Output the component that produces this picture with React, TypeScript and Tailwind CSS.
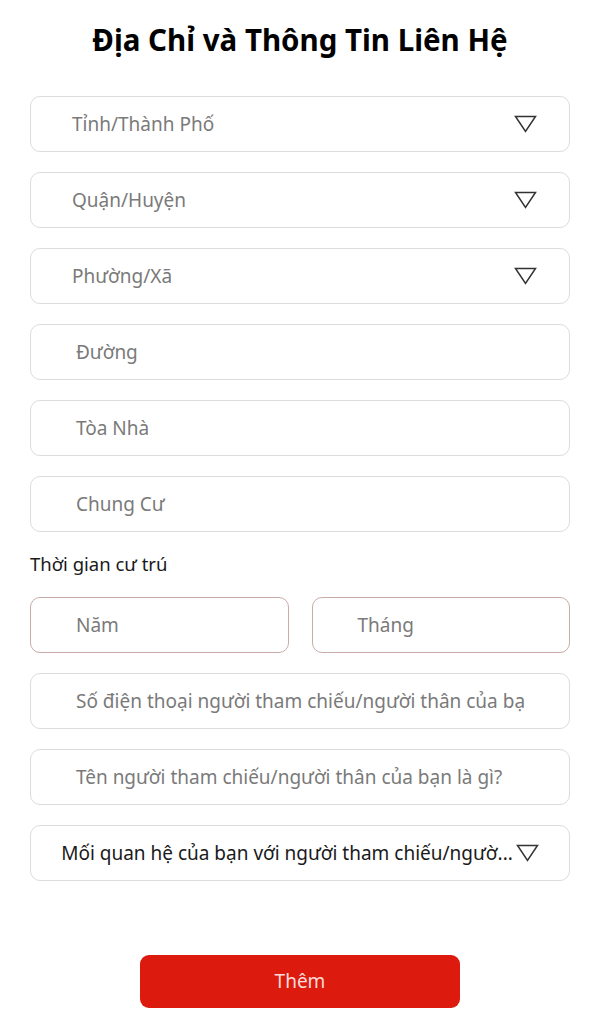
import React from "react";

const Arrow = () => (
  <svg width="23" height="18" viewBox="0 0 23 18" className="shrink-0">
    <path d="M1.5 1.5 H21.5 L11.5 16.5 Z" fill="none" stroke="#333" strokeWidth="1.5" strokeLinejoin="miter" />
  </svg>
);

const Select = ({ label }: { label: string }) => (
  <div className="h-[56px] rounded-[10px] border border-[#dcdcdc] flex items-center pl-[41px] pr-[32px] bg-white">
    <span className="flex-1 text-[19px] text-[#7a7a7a]">{label}</span>
    <Arrow />
  </div>
);

const Input = ({ label, className = "" }: { label: string; className?: string }) => (
  <div className={"h-[56px] rounded-[10px] border flex items-center pl-[45px] bg-white " + className}>
    <span className="text-[19px] text-[#7a7a7a] whitespace-nowrap">{label}</span>
  </div>
);

export default function App() {
  return (
    <div className="w-[600px] h-[1024px] bg-white px-[30px] flex flex-col" style={{ fontFamily: '"Noto Sans", "Open Sans", sans-serif' }}>
      <h1 className="mt-[20px] h-[40px] leading-[40px] text-center text-[29.5px] font-bold text-black">Địa Chỉ và Thông Tin Liên Hệ</h1>
      <div className="mt-[36px] flex flex-col gap-[20px]">
        <Select label="Tỉnh/Thành Phố" />
        <Select label="Quận/Huyện" />
        <Select label="Phường/Xã" />
        <Input label="Đường" className="border-[#dcdcdc]" />
        <Input label="Tòa Nhà" className="border-[#dcdcdc]" />
        <Input label="Chung Cư" className="border-[#dcdcdc]" />
      </div>
      <div className="mt-[18px] h-[28px] leading-[28px] text-[18.5px] text-[#1a1a1a]">Thời gian cư trú</div>
      <div className="mt-[19px] flex gap-[23px]">
        <Input label="Năm" className="flex-1 border-[#c9aca8]" />
        <Input label="Tháng" className="flex-1 border-[#c9aca8]" />
      </div>
      <div className="mt-[20px] flex flex-col gap-[20px]">
        <Input label="Số điện thoại người tham chiếu/người thân của bạ" className="border-[#dcdcdc]" />
        <Input label="Tên người tham chiếu/người thân của bạn là gì?" className="border-[#dcdcdc]" />
        <div className="h-[56px] rounded-[10px] border border-[#dcdcdc] flex items-center justify-center gap-[3px] px-[20px]">
          <span className="text-[19px] text-[#1a1a1a] whitespace-nowrap">Mối quan hệ của bạn với người tham chiếu/ngườ...</span>
          <Arrow />
        </div>
      </div>
      <div className="mt-[74px] flex justify-center">
        <button className="w-[320px] h-[53px] rounded-[9px] bg-[#dc1a0e] text-[#fbdcd8] text-[19px]">Thêm</button>
      </div>
    </div>
  );
}
